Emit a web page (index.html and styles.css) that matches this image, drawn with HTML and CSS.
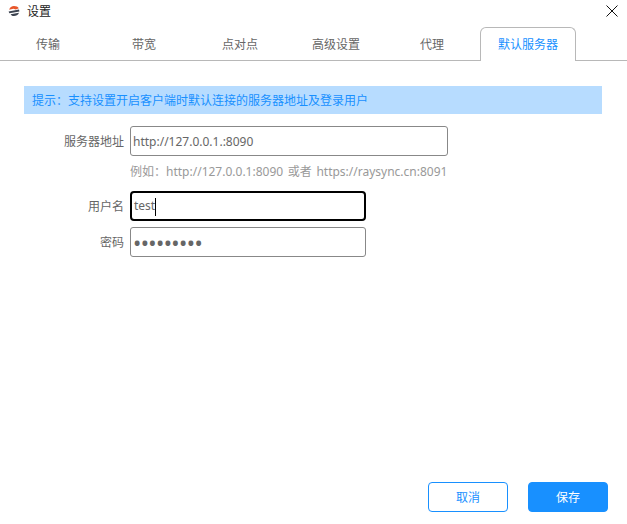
FILE: index.html
```html
<!DOCTYPE html>
<html lang="zh-CN">
<head>
    <meta charset="UTF-8">
    <meta name="viewport" content="width=device-width, initial-scale=1.0">
    <title>设置</title>
    <link rel="stylesheet" href="styles.css">
</head>
<body>
    <div id="container">
        <div class="titlebar">
            <svg class="logo" width="12" height="12" viewBox="0 0 12 12">
                <path d="M1.200 4.800C1.800 2.200 3.800 1 6 1c2.200 0 4 .8 4.800 2.200L7.800 4.400 5.400 3.800z" fill="#e8562a"/>
                <path d="M.6 6.600 11 4.400 11.400 6.400 1.400 8.200z" fill="#3c4350"/>
                <path d="M2.600 9.200 11 7.800C10.200 10 8 11 6 11c-1.500 0-2.700-.5-3.400-1.800z" fill="#3c4350"/>
            </svg>
            <span class="title">设置</span>
            <svg class="close" width="12" height="12" viewBox="0 0 12 12">
                <path d="M.5 .5 11.500 11.500M11.500 .5 .5 11.500" stroke="#111" stroke-width="1" fill="none"/>
            </svg>
        </div>
        <div class="tabs">
            <div class="tab">传输</div>
            <div class="tab">带宽</div>
            <div class="tab">点对点</div>
            <div class="tab">高级设置</div>
            <div class="tab">代理</div>
            <div class="tab active">默认服务器</div>
        </div>
        <div class="notice">提示<span class="colon">：</span>支持设置开启客户端时默认连接的服务器地址及登录用户</div>
        <div class="form">
            <div class="row">
                <label class="label">服务器地址</label>
                <input class="field wide" type="text" value="http://127.0.0.1.:8090">
            </div>
            <p class="example">例如<span class="colon">：</span>http://127.0.0.1:8090 或者 https://raysync.cn:8091</p>
            <div class="row user-row">
                <label class="label">用户名</label>
                <div class="field focused">test<span class="caret"></span></div>
            </div>
            <div class="row pass-row">
                <label class="label">密码</label>
                <input class="field secret" type="password" value="123456789">
            </div>
        </div>
        <div class="footer">
            <button class="btn">取消</button>
            <button class="btn primary">保存</button>
        </div>
    </div>
</body>
</html>
```
FILE: styles.css
```css
* {
    margin: 0;
    padding: 0;
    box-sizing: border-box;
}
body {
    background-color: #FFFFFF;
    font-family: "Noto Sans", "Noto Sans CJK SC", sans-serif;
    font-size: 12px;
    color: #666666;
}
#container {
    width: 627px;
    height: 524px;
    display: flex;
    flex-direction: column;
    overflow: hidden;
}
.titlebar {
    height: 27px;
    display: flex;
    align-items: center;
    padding: 0 9px 5px 8px;
}
.logo {
    margin-right: 7px;
}
.title {
    color: #222222;
    flex: 1;
}
.tabs {
    height: 34px;
    display: flex;
    border-bottom: 1px solid #B8B8B8;
}
.tab {
    width: 96px;
    padding-top: 1px;
    line-height: 33px;
    text-align: center;
}
.tab.active {
    height: 34px;
    padding-top: 0;
    color: #1890FF;
    background-color: #FFFFFF;
    border: 1px solid #B8B8B8;
    border-bottom: 0;
    border-radius: 6px 6px 0 0;
}
.notice {
    height: 28px;
    line-height: 27px;
    margin: 25px 25px 0 24px;
    padding-left: 8px;
    background-color: #B7DCFF;
    color: #1890FF;
}
.colon {
    font-family: "Noto Sans CJK TC", sans-serif;
}
.form {
    margin-top: 12px;
}
.row {
    display: flex;
    align-items: center;
}
.label {
    width: 124px;
    margin-right: 6px;
    text-align: right;
}
.field {
    width: 236px;
    height: 30px;
    line-height: 28px;
    padding: 0 2px;
    border: 1px solid #888888;
    border-radius: 3px;
    outline: 0;
    font-family: inherit;
    font-size: 12px;
    color: #666666;
    background-color: #FFFFFF;
}
.field.wide {
    width: 318px;
}
.field.secret {
    font-size: 22px;
    letter-spacing: -0.6px;
}
.field.focused {
    border: 2px solid #000000;
    line-height: 26px;
    padding: 0 2px;
    border-radius: 4px;
}
.caret {
    display: inline-block;
    width: 1px;
    height: 18px;
    vertical-align: middle;
    background-color: #000000;
}
.example {
    margin: 7px 0 0 130px;
    height: 16px;
    line-height: 16px;
    color: #999999;
    word-spacing: 1.5px;
}
.user-row {
    margin-top: 12px;
}
.pass-row {
    margin-top: 6px;
}
.footer {
    margin-top: auto;
    padding: 0 19px 12px 0;
    display: flex;
    justify-content: flex-end;
    gap: 20px;
}
.btn {
    width: 80px;
    height: 30px;
    border: 1px solid #1890FF;
    border-radius: 4px;
    background-color: #FFFFFF;
    color: #1890FF;
    font-family: inherit;
    font-size: 12px;
    cursor: pointer;
}
.btn.primary {
    background-color: #1890FF;
    color: #FFFFFF;
}
```
